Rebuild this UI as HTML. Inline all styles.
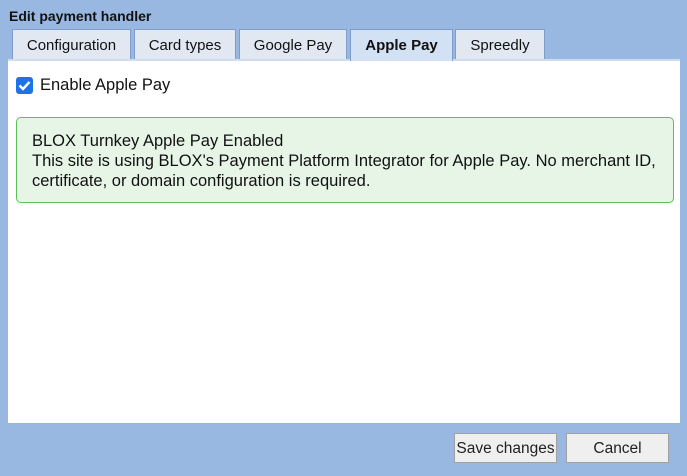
<!DOCTYPE html>
<html><head><style>
body{margin:0;width:687px;height:476px;background:#98b8e1;font-family:"Liberation Sans",Arial,sans-serif;position:relative;overflow:hidden}
.title{position:absolute;left:9px;top:8px;font-size:14px;font-weight:bold;color:#111}
.tab{position:absolute;top:29px;height:30px;box-sizing:border-box;background:#e1e8f2;border:1px solid #7f9dc8;border-bottom:none;font-size:15px;color:#111;text-align:center;line-height:31px}
.tab.act{background:#d3e1f4;font-weight:bold;height:32px}
.panel{position:absolute;left:8px;top:59px;width:672px;height:364px;background:#fff;border-top:2px solid #cfdcee;box-sizing:border-box}
.cb{position:absolute;left:16px;top:77px;width:17px;height:17px;background:#1a73e8;border-radius:3px}
.lbl{position:absolute;left:40px;top:76px;font-size:16.5px;color:#111}
.box{position:absolute;left:16px;top:117px;width:658px;height:86px;box-sizing:border-box;background:#e7f5e7;border:1px solid #5cbf5c;border-radius:5px;padding:13px 15px;font-size:16.5px;line-height:20px;color:#111}
.btn{position:absolute;top:433px;height:30px;box-sizing:border-box;background:#efefef;border:1px solid #a0a0a0;font-size:15.5px;line-height:30px;text-align:center;color:#222}
</style></head><body>
<div class="title">Edit payment handler</div>
<div class="panel"></div>
<div class="tab" style="left:12px;width:119px">Configuration</div>
<div class="tab" style="left:134px;width:102px">Card types</div>
<div class="tab" style="left:239px;width:108px">Google Pay</div>
<div class="tab act" style="left:350px;width:103px">Apple Pay</div>
<div class="tab" style="left:455px;width:90px">Spreedly</div>
<div class="cb"><svg width="17" height="17" viewBox="0 0 17 17"><path d="M3.5 8.5l3.5 3.5 6.5-7" fill="none" stroke="#fff" stroke-width="2.4"/></svg></div>
<div class="lbl">Enable Apple Pay</div>
<div class="box">BLOX Turnkey Apple Pay Enabled<br>This site is using BLOX's Payment Platform Integrator for Apple Pay. No merchant ID, certificate, or domain configuration is required.</div>
<div class="btn" style="left:454px;width:103px">Save changes</div>
<div class="btn" style="left:566px;width:103px">Cancel</div>
</body></html>
